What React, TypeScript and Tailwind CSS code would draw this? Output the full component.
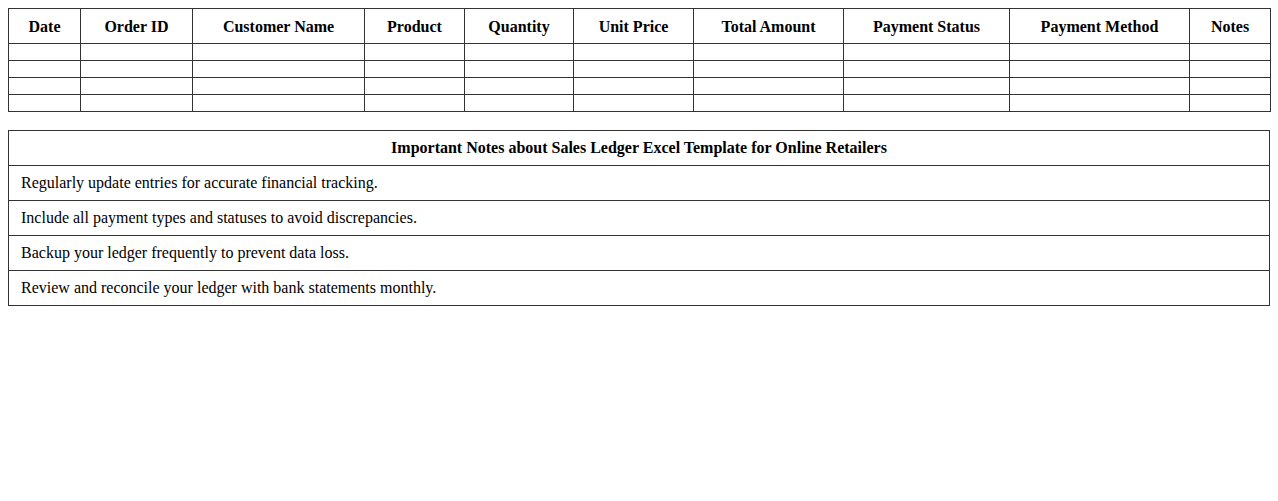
import React from "react";

const headers = [
  "Date",
  "Order ID",
  "Customer Name",
  "Product",
  "Quantity",
  "Unit Price",
  "Total Amount",
  "Payment Status",
  "Payment Method",
  "Notes",
];
const widths = [
  "w-[72px]",
  "w-[112px]",
  "w-[172px]",
  "w-[100px]",
  "w-[109px]",
  "w-[120px]",
  "w-[150px]",
  "w-[166px]",
  "w-[180px]",
  "w-[81px]",
];

const notes = [
  "Regularly update entries for accurate financial tracking.",
  "Include all payment types and statuses to avoid discrepancies.",
  "Backup your ledger frequently to prevent data loss.",
  "Review and reconcile your ledger with bank statements monthly.",
];

export default function App() {
  return (
    <div className="min-h-[501px] bg-white p-2 text-[16px] leading-[18px] text-black font-['Liberation_Serif','Times_New_Roman',serif]">
      <table className="w-full table-fixed border-collapse border border-[#333]">
        <colgroup>
          {widths.map((w, i) => (
            <col key={i} className={w} />
          ))}
        </colgroup>
        <thead>
          <tr>
            {headers.map((h) => (
              <th
                key={h}
                className="border border-[#333] px-2 pt-[9px] pb-[7px] text-center font-bold"
              >
                {h}
              </th>
            ))}
          </tr>
        </thead>
        <tbody>
          {[0, 1, 2, 3].map((r) => (
            <tr key={r}>
              {headers.map((h) => (
                <td key={h} className="h-[17px] border border-[#333] p-2 leading-none"></td>
              ))}
            </tr>
          ))}
        </tbody>
      </table>

      <table className="mt-[18px] w-full border-collapse border border-[#333]">
        <thead>
          <tr>
            <th className="border border-[#333] px-3 py-2 text-center font-bold">
              Important Notes about Sales Ledger Excel Template for Online Retailers
            </th>
          </tr>
        </thead>
        <tbody>
          {notes.map((n) => (
            <tr key={n}>
              <td className="border border-[#333] px-3 py-2 text-left">{n}</td>
            </tr>
          ))}
        </tbody>
      </table>
    </div>
  );
}
